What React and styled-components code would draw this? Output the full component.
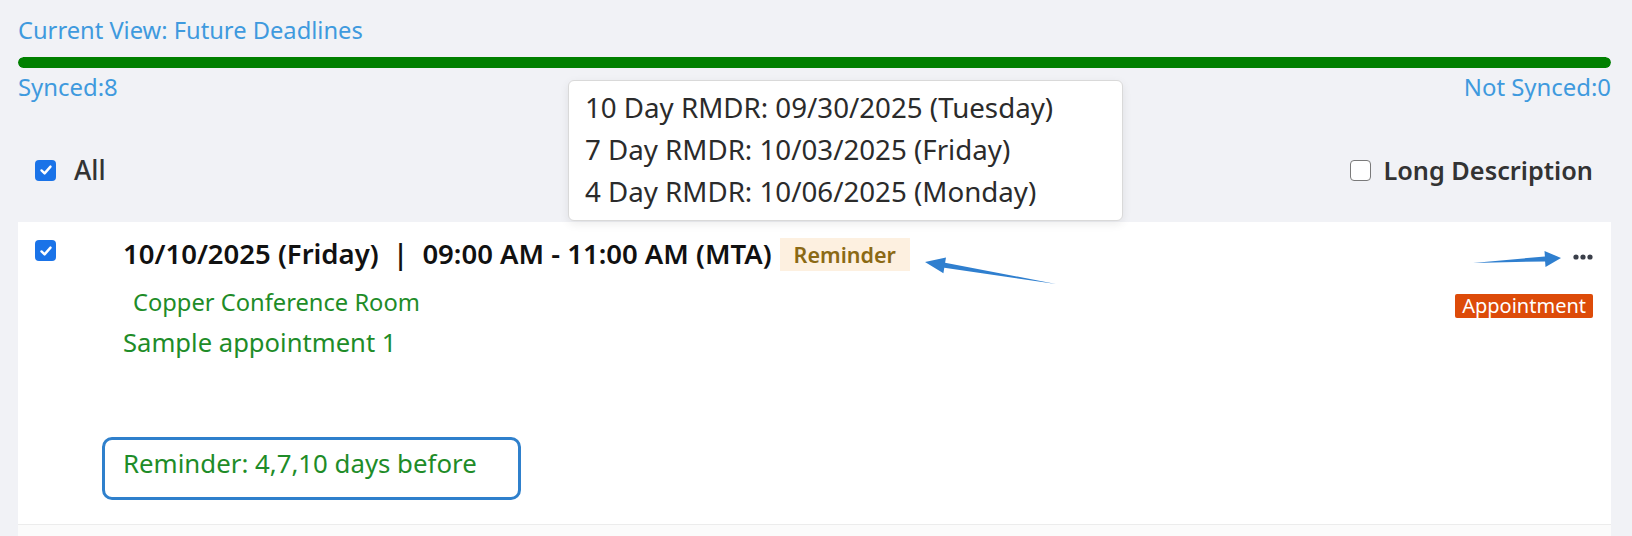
import React from "react";
import styled, { createGlobalStyle } from "styled-components";

const GlobalStyle = createGlobalStyle`
  html, body { margin: 0; padding: 0; background: #f1f2f6; }
  body { font-family: "Noto Sans", "Open Sans", sans-serif; }
  * { box-sizing: border-box; }
`;

const Page = styled.div`
  position: relative;
  padding: 14px 21px 0 18px;
  width: 1632px;
  height: 536px;
  overflow: hidden;
`;

const Title = styled.div`
  color: #3f9ade;
  font-size: 23.7px;
  line-height: 32px;
`;

const ProgressTrack = styled.div`
  margin-top: 11px;
  height: 11px;
  border-radius: 6px;
  background: #e3e6ec;
  overflow: hidden;
`;

const ProgressFill = styled.div`
  height: 100%;
  background: #008000;
  border-radius: 6px;
`;

const SyncRow = styled.div`
  margin-top: 4px;
  display: flex;
  justify-content: space-between;
`;

const SyncText = styled.span`
  color: #3f9ade;
  font-size: 23.9px;
  line-height: 30px;
`;

const Toolbar = styled.div`
  margin-top: 48px;
  height: 40px;
  display: flex;
  align-items: center;
  justify-content: space-between;
  padding: 0 18px 0 17px;
`;

const CheckLabel = styled.label`
  display: flex;
  align-items: center;
  gap: ${(p) => (p.$bold ? "12px" : "18px")};
  color: #333;
  font-size: ${(p) => (p.$bold ? "25.3px" : "26.5px")};
  font-weight: ${(p) => (p.$bold ? 600 : 500)};
  line-height: 34px;
`;

const Box = styled.span`
  display: inline-flex;
  align-items: center;
  justify-content: center;
  width: 21px;
  height: 21px;
  border-radius: 4px;
  flex: none;
  background: ${(p) => (p.$checked ? "#1a73e8" : "#fff")};
  border: ${(p) => (p.$checked ? "none" : "1.5px solid #7a7a7a")};
`;

const CheckBox = ({ checked }) => (
  <Box $checked={checked}>
    {checked && (
      <svg width="14" height="14" viewBox="0 0 14 14">
        <path d="M2.5 7.4 L5.6 10.4 L11.5 3.6" fill="none" stroke="#fff" strokeWidth="2.4" strokeLinecap="round" strokeLinejoin="round" />
      </svg>
    )}
  </Box>
);

const Card = styled.div`
  position: relative;
  margin-top: 32px;
  background: #fff;
  display: flex;
  padding: 14px 18px 24px 17px;
  border-bottom: 1px solid #ececec;
`;

const NextCard = styled.div`
  height: 20px;
  background: #fbfbfb;
`;

const CheckCol = styled.div`
  width: 88px;
  flex: none;
  padding-top: 4px;
`;

const CardBody = styled.div`
  flex: 1;
  display: flex;
  flex-direction: column;
  align-items: flex-start;
`;

const HeaderRow = styled.div`
  display: flex;
  align-items: center;
  gap: 8px;
  height: 36px;
`;

const HeaderText = styled.span`
  color: #111;
  font-size: 27.5px;
  font-weight: 600;
  white-space: pre;
  line-height: 36px;
`;

const ReminderBadge = styled.span`
  background: #fdf0e0;
  color: #8b6914;
  font-size: 21.5px;
  font-weight: 600;
  height: 33px;
  line-height: 33px;
  padding: 0 14px;
`;

const Location = styled.div`
  margin-top: 13px;
  padding-left: 10px;
  color: #1e8c28;
  font-size: 23.7px;
  line-height: 34px;
`;

const Description = styled.div`
  margin-top: 6px;
  color: #1e8c28;
  font-size: 25.6px;
  line-height: 36px;
`;

const ReminderBox = styled.div`
  margin-top: 76px;
  margin-left: -21px;
  border: 3px solid #2f80cc;
  border-radius: 10px;
  padding: 5px 41px 15px 18px;
  color: #1e8c28;
  font-size: 25.8px;
  line-height: 37px;
`;

const CardSide = styled.div`
  display: flex;
  flex-direction: column;
  align-items: flex-end;
`;

const MoreButton = styled.button`
  margin-top: 3px;
  height: 36px;
  padding: 0;
  border: none;
  background: none;
  display: flex;
  align-items: center;
`;

const TypeBadge = styled.span`
  margin-top: 19px;
  background: #dd4b09;
  color: #fff;
  font-size: 20px;
  height: 24px;
  line-height: 24px;
  padding: 0 7px;
  border-radius: 2px;
`;

const Overlay = styled.svg`
  position: absolute;
  left: 0;
  top: 0;
  pointer-events: none;
  overflow: visible;
`;

const Popover = styled.div`
  position: absolute;
  left: 568px;
  top: 80px;
  width: 555px;
  height: 141px;
  background: #fff;
  border: 1px solid #d9d9d9;
  border-radius: 6px;
  box-shadow: 0 3px 10px rgba(0, 0, 0, 0.08);
  padding: 5px 16px;
  display: flex;
  flex-direction: column;
`;

const PopLine = styled.div`
  color: #2b2b2b;
  font-size: 27.7px;
  line-height: 42px;
  white-space: nowrap;
`;

const reminders = [
  "10 Day RMDR: 09/30/2025 (Tuesday)",
  "7 Day RMDR: 10/03/2025 (Friday)",
  "4 Day RMDR: 10/06/2025 (Monday)",
];

export default function App() {
  return (
    <>
      <GlobalStyle />
      <Page>
        <Title>Current View: Future Deadlines</Title>
        <ProgressTrack>
          <ProgressFill style={{ width: "100%" }} />
        </ProgressTrack>
        <SyncRow>
          <SyncText>Synced:8</SyncText>
          <SyncText>Not Synced:0</SyncText>
        </SyncRow>
        <Toolbar>
          <CheckLabel>
            <CheckBox checked />
            All
          </CheckLabel>
          <CheckLabel $bold>
            <CheckBox />
            Long Description
          </CheckLabel>
        </Toolbar>
        <Card>
          <CheckCol>
            <CheckBox checked />
          </CheckCol>
          <CardBody>
            <HeaderRow>
              <HeaderText>10/10/2025 (Friday)  |  09:00 AM - 11:00 AM (MTA)</HeaderText>
              <ReminderBadge>Reminder</ReminderBadge>
            </HeaderRow>
            <Location>Copper Conference Room</Location>
            <Description>Sample appointment 1</Description>
            <ReminderBox>Reminder: 4,7,10 days before</ReminderBox>
          </CardBody>
          <CardSide>
            <MoreButton aria-label="More">
              <svg width="20" height="6" viewBox="0 0 20 6">
                <circle cx="3" cy="3" r="2.6" fill="#3a3f4a" />
                <circle cx="10" cy="3" r="2.6" fill="#3a3f4a" />
                <circle cx="17" cy="3" r="2.6" fill="#3a3f4a" />
              </svg>
            </MoreButton>
            <TypeBadge>Appointment</TypeBadge>
          </CardSide>
          <Overlay width="1593" height="300">
            <polygon
              points="907,40 928,35.4 927.1,40.8 1038,62 926.3,45.8 925.4,51.2"
              fill="#2f7fcf"
            />
            <polygon
              points="1543,36 1526.5,28.9 1526.9,34.4 1455,41 1527.1,39.4 1527.5,44.9"
              fill="#2f7fcf"
            />
          </Overlay>
        </Card>
        <NextCard />
        <Popover>
          {reminders.map((r) => (
            <PopLine key={r}>{r}</PopLine>
          ))}
        </Popover>
      </Page>
    </>
  );
}
